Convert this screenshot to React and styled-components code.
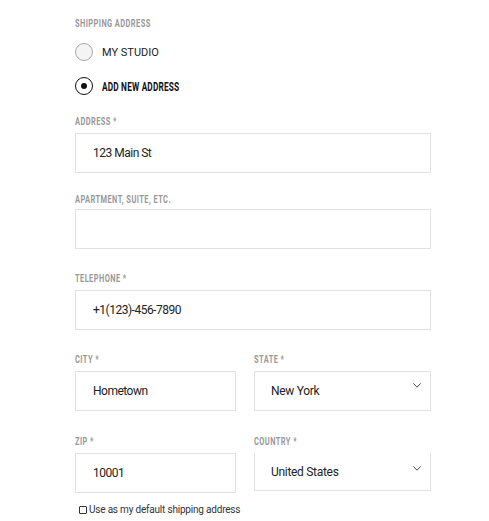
import React, { useState } from 'react';
import styled, { createGlobalStyle } from 'styled-components';

const GlobalStyle = createGlobalStyle`
  body {
    margin: 0;
    background: #ffffff;
    font-family: Roboto, "Liberation Sans", sans-serif;
    color: #222;
  }
`;

const Page = styled.div`
  width: 356px;
  padding: 18px 0 0 75px;
  display: flex;
  flex-direction: column;
`;

// condensed caps, narrowed by hand since no condensed face is installed
const Label = styled.div`
  font-family: Roboto, "Liberation Sans", sans-serif;
  font-weight: 700;
  font-size: 10.5px;
  line-height: 12px;
  height: 12px;
  letter-spacing: 0.6px;
  color: #999;
  text-transform: uppercase;
  white-space: nowrap;
  transform: scaleX(0.71);
  transform-origin: left center;
  margin-bottom: ${({ mb }) => (mb != null ? mb : 5)}px;
`;

const RadioList = styled.div`
  display: flex;
  flex-direction: column;
  gap: 16px;
  margin-top: 13px;
  margin-bottom: 21px;
`;

const RadioRow = styled.label`
  display: flex;
  align-items: center;
  gap: 9px;
  height: 18px;
  cursor: pointer;
`;

const RadioCircle = styled.span`
  flex: none;
  width: 18px;
  height: 18px;
  box-sizing: border-box;
  border-radius: 50%;
  border: ${({ checked }) => (checked ? '1.6px solid #111' : '1px solid #a8a8a8')};
  background: ${({ checked }) => (checked ? '#fff' : '#f4f4f4')};
  display: flex;
  align-items: center;
  justify-content: center;
  &::after {
    content: '';
    width: 6px;
    height: 6px;
    border-radius: 50%;
    background: #111;
    display: ${({ checked }) => (checked ? 'block' : 'none')};
  }
`;

const RadioText = styled.span`
  font-size: 11px;
  text-transform: uppercase;
  color: #222;
  white-space: nowrap;
  ${({ checked }) =>
    checked &&
    `
    font-weight: 700;
    font-size: 12.5px;
    letter-spacing: 0.3px;
    color: #111;
    transform: scaleX(0.66);
    transform-origin: left center;
  `}
`;

const Field = styled.div`
  display: flex;
  flex-direction: column;
  margin-top: ${({ mt }) => mt || 0}px;
`;

const Row = styled.div`
  display: grid;
  grid-template-columns: 161px 1fr;
  column-gap: 18px;
  margin-top: ${({ mt }) => mt || 0}px;
`;

const Input = styled.input`
  box-sizing: border-box;
  width: 100%;
  height: 40px;
  border: 1px solid #e2e2e2;
  padding: 0 0 0 17px;
  font-family: Roboto, "Liberation Sans", sans-serif;
  font-size: 12px;
  letter-spacing: -0.5px;
  color: #222;
  outline: none;
  background: #fff;
`;

const SelectBox = styled.div`
  box-sizing: border-box;
  height: ${({ h }) => h || 40}px;
  border: 1px solid #e2e2e2;
  border-top: ${({ noTop }) => (noTop ? 'none' : '1px solid #e2e2e2')};
  display: flex;
  align-items: center;
  justify-content: space-between;
  padding: 0 9px 0 16px;
  font-size: 12px;
  letter-spacing: -0.3px;
  color: #222;
`;

const Chevron = styled.svg`
  align-self: flex-start;
  width: 8px;
  height: 5px;
  margin-top: ${({ top }) => top}px;
`;

const CheckRow = styled.label`
  display: flex;
  align-items: center;
  gap: 2px;
  margin-top: 11px;
  margin-left: 4px;
  font-size: 10px;
  letter-spacing: -0.2px;
  color: #333;
`;

const Box = styled.span`
  width: 6px;
  height: 6px;
  border: 1px solid #333;
  border-radius: 1px;
  background: #fff;
`;

const Select = ({ value, h, noTop }) => (
  <SelectBox h={h} noTop={noTop}>
    <span>{value}</span>
    <Chevron viewBox="0 0 8 5" top={noTop ? 13 : 11}>
      <path d="M0.4 0.4 L4 4.2 L7.6 0.4" fill="none" stroke="#333" strokeWidth="0.9" />
    </Chevron>
  </SelectBox>
);

const App = () => {
  const [choice, setChoice] = useState('new');

  return (
    <Page>
      <GlobalStyle />
      <Label mb={0}>Shipping Address</Label>
      <RadioList>
        <RadioRow onClick={() => setChoice('studio')}>
          <RadioCircle checked={choice === 'studio'} />
          <RadioText checked={choice === 'studio'}>My Studio</RadioText>
        </RadioRow>
        <RadioRow onClick={() => setChoice('new')}>
          <RadioCircle checked={choice === 'new'} />
          <RadioText checked={choice === 'new'}>Add New Address</RadioText>
        </RadioRow>
      </RadioList>

      <Field>
        <Label>Address *</Label>
        <Input defaultValue="123 Main St" />
      </Field>
      <Field mt={21}>
        <Label mb={3}>Apartment, Suite, etc.</Label>
        <Input defaultValue="" />
      </Field>
      <Field mt={24}>
        <Label>Telephone *</Label>
        <Input defaultValue="+1(123)-456-7890" />
      </Field>
      <Row mt={24}>
        <Field>
          <Label>City *</Label>
          <Input defaultValue="Hometown" />
        </Field>
        <Field>
          <Label>State *</Label>
          <Select value="New York" />
        </Field>
      </Row>
      <Row mt={25}>
        <Field>
          <Label>Zip *</Label>
          <Input defaultValue="10001" />
        </Field>
        <Field>
          <Label>Country *</Label>
          <Select value="United States" h={38} noTop />
        </Field>
      </Row>

      <CheckRow>
        <Box />
        <span>Use as my default shipping address</span>
      </CheckRow>
    </Page>
  );
};

export default App;
